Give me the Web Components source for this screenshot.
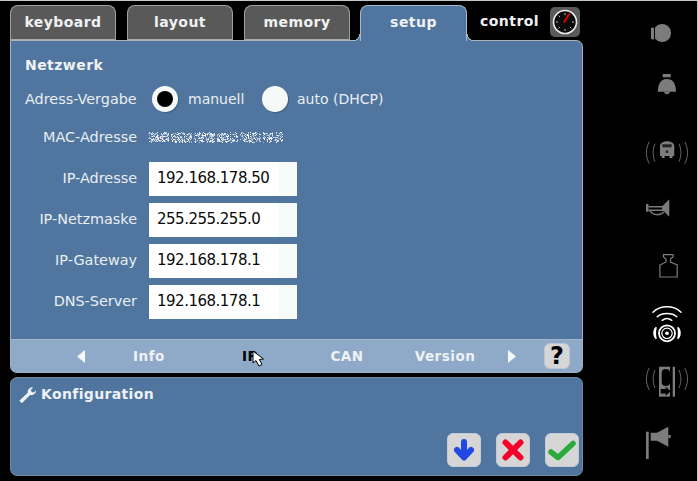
<!DOCTYPE html>
<html>
<head>
<meta charset="utf-8">
<style>
  html, body { margin: 0; padding: 0; background: #000; }
  body { width: 698px; height: 481px; overflow: hidden; font-family: "DejaVu Sans", sans-serif; color: #eef2f5; }
</style>
</head>
<body>
<setup-screen>
  <tab-item slot="tabs" text="keyboard"></tab-item>
  <tab-item slot="tabs" text="layout"></tab-item>
  <tab-item slot="tabs" text="memory"></tab-item>
  <tab-item slot="tabs" text="setup" active></tab-item>
  <control-tab slot="tabs"></control-tab>

  <net-panel slot="main">
    <radio-row></radio-row>
    <mac-row></mac-row>
    <field-row label="IP-Adresse" value="192.168.178.50"></field-row>
    <field-row label="IP-Netzmaske" value="255.255.255.0"></field-row>
    <field-row label="IP-Gateway" value="192.168.178.1"></field-row>
    <field-row label="DNS-Server" value="192.168.178.1"></field-row>
  </net-panel>

  <config-panel slot="config"></config-panel>
  <side-rail slot="rail"></side-rail>
</setup-screen>

<script>
window.customElements.define('setup-screen', class extends HTMLElement {
  constructor() {
    super();
    this.attachShadow({mode: 'open'}).innerHTML = `
      <style>
        :host { display: grid; grid-template-columns: 573px 48px; column-gap: 60px; width: 698px; height: 481px; box-sizing: border-box; padding: 5px 0 0 10px; box-shadow: inset 0 1px 0 #c8c8c8, inset -1px 0 0 #c8c8c8; }
        .left { display: flex; flex-direction: column; }
        .tabs { display: flex; height: 35px; }
      </style>
      <div class="left">
        <div class="tabs"><slot name="tabs"></slot></div>
        <slot name="main"></slot>
        <slot name="config"></slot>
      </div>
      <slot name="rail"></slot>
    `;
  }
});

window.customElements.define('tab-item', class extends HTMLElement {
  constructor() {
    super();
    const text = this.getAttribute('text');
    this.attachShadow({mode: 'open'}).innerHTML = `
      <style>
        :host { display: block; position: relative; box-sizing: border-box; width: 106px; height: 35px; margin-right: 11px;
          background: #595959; border: 1px solid #9aa3a3; border-bottom: 0; border-radius: 8px 8px 0 0;
          font-weight: bold; font-size: 14px; letter-spacing: .45px; text-align: center; line-height: 32px; color: #f0f2f2; }
        :host([active]) { background: #50769f; width: 107px; margin-left: -1px; margin-right: 0; height: 36px; z-index: 2; border-color: #a9b8c8; }
        :host(:not([active])) { box-shadow: inset 0 -1px 0 #a4adad; }
        :host([active])::before, :host([active])::after { content: ""; position: absolute; bottom: 0; width: 7px; height: 7px; }
        :host([active])::before { left: -8px; background: radial-gradient(circle at 0 0, transparent 6px, #a9b8c8 6.5px, #a9b8c8 7px, #50769f 7.5px); }
        :host([active])::after { right: -8px; background: radial-gradient(circle at 100% 0, transparent 6px, #a9b8c8 6.5px, #a9b8c8 7px, #50769f 7.5px); }
      </style>
      ${text}
    `;
  }
});

window.customElements.define('control-tab', class extends HTMLElement {
  constructor() {
    super();
    this.attachShadow({mode: 'open'}).innerHTML = `
      <style>
        :host { display: flex; align-items: center; height: 32px; margin-left: 13px; font-weight: bold; font-size: 14px; letter-spacing: .45px; color: #f0f2f2; }
        .gauge { margin-left: 11px; margin-top: 1px; width: 30px; height: 30px; border-radius: 5px; background: #5a5a5a; display: block; }
      </style>
      control
      <svg class="gauge" viewBox="0 0 30 30">
        <circle cx="15" cy="15" r="11.500" fill="#0b0b0b" stroke="#eee" stroke-width="1.600"/>
        <g stroke="#bbb" stroke-width="1">
          <path d="M15 6v2M15 22v2M6 15h2M22 15h2M8.600 8.600l1.400 1.400M20 20l1.400 1.400M8.600 21.400l1.400-1.400"/>
        </g>
        <path d="M14 15.500L19.500 6.500" stroke="#e60000" stroke-width="1.800"/>
      </svg>
    `;
  }
});

window.customElements.define('net-panel', class extends HTMLElement {
  constructor() {
    super();
    this.attachShadow({mode: 'open'}).innerHTML = `
      <style>
        :host { display: flex; flex-direction: column; box-sizing: border-box; height: 333px; background: #50769f; border: 1px solid #a3b2c2; border-top-color: #a9b4b4; border-radius: 0 7px 7px 7px; overflow: hidden; }
        .body { flex: 1; padding: 15px 14px 0; }
        h2 { margin: 0 0 10px; font-size: 14px; font-weight: bold; letter-spacing: .45px; line-height: 18px; color: #f0f2f4; }
      </style>
      <div class="body">
        <h2>Netzwerk</h2>
        <slot></slot>
      </div>
      <nav-bar></nav-bar>
    `;
  }
});

window.customElements.define('radio-row', class extends HTMLElement {
  constructor() {
    super();
    this.attachShadow({mode: 'open'}).innerHTML = `
      <style>
        :host { display: flex; align-items: center; height: 30px; font-size: 14.4px; color: #e9eef2; white-space: nowrap; }
        .label { width: 127px; }
        .radio { width: 26px; height: 26px; border-radius: 50%; background: #f6f9f7; display: grid; place-items: center; box-shadow: 1px 1px 1px #3d5f85; }
        .dot { width: 16px; height: 16px; border-radius: 50%; background: #000; }
        .opt { margin-left: 10px; width: 74px; font-size: 14px; }
        .opt.last { margin-left: 9px; }
      </style>
      <span class="label">Adress-Vergabe</span>
      <span class="radio"><span class="dot"></span></span>
      <span class="opt">manuell</span>
      <span class="radio"></span>
      <span class="opt last">auto (DHCP)</span>
    `;
  }
});

window.customElements.define('mac-row', class extends HTMLElement {
  constructor() {
    super();
    // scrambled address: seeded speckle, so that the picture is the same on every run
    let seed = 7, dots = '';
    for (let x = 0; x < 135; x++) {
      for (let y = 0; y < 11; y++) {
        seed = (seed * 16807) % 2147483647;
        const edge = y === 0 || y === 10 ? 18 : 52;
        if (seed % 100 < edge && (x % 23) < 21) {
          const a = (seed % 7) / 10 + .4;
          dots += `<rect x="${x}" y="${y}" width="1" height="1" fill="#fff" opacity="${a}"/>`;
        }
      }
    }
    this.attachShadow({mode: 'open'}).innerHTML = `
      <style>
        :host { display: flex; align-items: center; height: 30px; margin-top: 8px; margin-bottom: 10px; font-size: 14.4px; color: #e9eef2; white-space: nowrap; }
        .label { width: 112px; text-align: right; }
        svg { margin-left: 11px; display: block; }
      </style>
      <span class="label">MAC-Adresse</span>
      <svg width="135" height="11" viewBox="0 0 135 11">${dots}</svg>
    `;
  }
});

window.customElements.define('field-row', class extends HTMLElement {
  constructor() {
    super();
    this.attachShadow({mode: 'open'}).innerHTML = `
      <style>
        :host { display: flex; align-items: center; height: 34px; margin-bottom: 7px; font-size: 14.4px; color: #e9eef2; white-space: nowrap; }
        .label { width: 112px; text-align: right; padding-bottom: 2px; }
        .input { box-sizing: border-box; width: 148px; height: 34px; margin-left: 12px; padding-left: 8px; color: #0a0a0a; font-size: 15px; letter-spacing: -.5px; line-height: 33px;
          background: linear-gradient(90deg, #fff 130px, #f6faf8 130px); }
      </style>
      <span class="label">${this.getAttribute('label')}</span>
      <span class="input">${this.getAttribute('value')}</span>
    `;
  }
});

window.customElements.define('nav-bar', class extends HTMLElement {
  constructor() {
    super();
    this.attachShadow({mode: 'open'}).innerHTML = `
      <style>
        :host { display: block; position: relative; height: 32px; background: #8fa9c8; border-top: 1px solid #a3b5cb; font-weight: bold; font-size: 13.5px; letter-spacing: .5px; color: #eef2f5; }
        .row { display: grid; grid-template-columns: 74px 128px 74px 120px 76px 61px 1fr; align-items: center; height: 32px; }
        span { text-align: center; }
        .arrow { display: block; width: 8px; height: 13px; }
        .l { justify-self: end; }
        .r { justify-self: start; margin-left: 25px; }
        .cur { color: #000; }
        .help { width: 26px; height: 26px; box-sizing: border-box; border-radius: 6px; background: #d6d6d6; border: 1px solid #bcc6d2; color: #000; font-size: 24px; line-height: 24px; letter-spacing: 0; }
        .pointer { position: absolute; left: 241px; top: 10px; }
      </style>
      <div class="row">
        <svg class="arrow l" viewBox="0 0 8 13"><path d="M8 0V13L0 6.500Z" fill="#f4f6f8"/></svg>
        <span>Info</span>
        <span class="cur">IP</span>
        <span>CAN</span>
        <span>Version</span>
        <svg class="arrow r" viewBox="0 0 8 13"><path d="M0 0V13L8 6.500Z" fill="#f4f6f8"/></svg>
        <span class="help">?</span>
      </div>
      <svg class="pointer" width="14" height="18" viewBox="0 0 14 18">
        <path d="M1 1L1 13L4 10.500L7 16L10 14.500L7.300 9.500L11.500 9Z" fill="#fff" stroke="#000" stroke-width="1"/>
      </svg>
    `;
  }
});

window.customElements.define('config-panel', class extends HTMLElement {
  constructor() {
    super();
    this.attachShadow({mode: 'open'}).innerHTML = `
      <style>
        :host { display: flex; flex-direction: column; justify-content: space-between; box-sizing: border-box; height: 99px; margin-top: 4px; background: #50769f; border: 1px solid #76899e; border-radius: 7px; padding: 7px 3px 8px 8px; }
        h3 { margin: 0; display: flex; align-items: center; gap: 5px; font-size: 14px; font-weight: bold; letter-spacing: .35px; line-height: 18px; color: #eef2f5; }
        .acts { display: flex; justify-content: flex-end; gap: 15px; }
      </style>
      <h3>
        <svg width="17" height="17" viewBox="0 0 17 17"><path d="M0.800 14.200L8.800 6.800C8.200 4 10.400 1 14.200 1.200L11.800 3.700L12.600 6L15 6.600L17 4.200C17.300 7.600 14.200 9.800 11 9L3.600 16.400C2.400 17.300 .2 15.600 .8 14.200Z" fill="#f0f3f5"/></svg>
        Konfiguration
      </h3>
      <div class="acts">
        <act-button><svg viewBox="0 0 24 24" width="24" height="24"><path d="M12 4V18M5 12L12 19.500L19 12" fill="none" stroke="#2148e0" stroke-width="6" stroke-linecap="round" stroke-linejoin="round"/></svg></act-button>
        <act-button><svg viewBox="0 0 24 24" width="24" height="24"><path d="M4.500 4.500L19.500 19.500M19.500 4.500L4.500 19.500" fill="none" stroke="#f5002a" stroke-width="6" stroke-linecap="round"/></svg></act-button>
        <act-button><svg viewBox="0 0 30 24" width="30" height="24"><path d="M4 14L11 19.500L26 5.500" fill="none" stroke="#2aaa3a" stroke-width="5.500" stroke-linecap="round" stroke-linejoin="round"/></svg></act-button>
      </div>
    `;
  }
});

window.customElements.define('act-button', class extends HTMLElement {
  constructor() {
    super();
    this.attachShadow({mode: 'open'}).innerHTML = `
      <style>
        :host { display: grid; place-items: center; box-sizing: border-box; width: 34px; height: 34px; border-radius: 6px; background: #d6d6d6; border: 1px solid #c2ccd6; }
      </style>
      <slot></slot>
    `;
  }
});

window.customElements.define('side-rail', class extends HTMLElement {
  constructor() {
    super();
    const g = '#7c7c7c';
    const waves = `<path d="M6.300 0C2.500 7 2.500 15 6.300 22M12 2C9.500 8 9.500 14 12 20M36 2C38.500 8 38.500 14 36 20M41.700 0C45.500 7 45.500 15 41.700 22" fill="none" stroke="#666" stroke-width="1"/>`;
    this.attachShadow({mode: 'open'}).innerHTML = `
      <style>
        :host { display: flex; flex-direction: column; width: 48px; padding-top: 15px; }
        svg { display: block; flex: none; }
      </style>
      <svg width="48" height="26" viewBox="0 0 48 26">
        <rect x="8" y="7.700" width="3" height="11.600" fill="${g}"/>
        <path d="M12 7.500A9 9 0 1 1 12 18.500Z" fill="${g}"/>
      </svg>
      <svg style="margin-top:26px" width="48" height="26" viewBox="0 0 48 26">
        <rect x="19.700" y="2" width="8" height="3.300" fill="${g}"/>
        <path d="M24 7C17 7 15 13 14.700 19.700H33C32.700 13 31 7 24 7Z" fill="${g}"/>
        <path d="M21 19.700H27C26.500 23 21.500 23 21 19.700Z" fill="${g}"/>
      </svg>
      <svg style="margin-top:40px" width="48" height="28" viewBox="0 0 48 28">
        <g transform="translate(0 3.700)">${waves}</g>
        <path d="M17 8C17 1.500 31.300 1.500 31.300 8V18H29.500V20H26.500V18H21.500V20H18.700V18H17Z" fill="${g}"/>
        <rect x="19.300" y="6.300" width="9.400" height="3" fill="#222"/><rect x="22.700" y="12.500" width="2.600" height="2.400" fill="#222"/>
      </svg>
      <svg style="margin-top:30px" width="48" height="24" viewBox="0 0 48 24">
        <rect x="3" y="8" width="2.500" height="7.700" fill="${g}"/>
        <path d="M5.500 10H19.500L26.300 3.300V20.700L20.500 15H5.500V13.500H19V11.500H5.500Z" fill="${g}"/>
        <path d="M7 14.500C10 20 17 19.500 21 16" fill="none" stroke="${g}" stroke-width="1.500"/>
      </svg>
      <svg style="margin-top:32px" width="48" height="28" viewBox="0 0 48 28">
        <path d="M20.500 2.600H30V5L27.500 7V10L34.200 13V25H16.900V13L23 10V7L20.500 5Z" fill="none" stroke="${g}" stroke-width="1.200"/>
      </svg>
      <svg style="margin-top:24px" width="48" height="40" viewBox="0 0 48 40">
        <g fill="none" stroke="#fff" stroke-linecap="round" stroke-width="1.500">
          <path d="M10 8.300C17 .8 31 .8 38 8.300"/>
          <path d="M14.200 12.800C19 8.500 29 8.500 33.800 12.800"/>
          <path d="M19.200 16.300C22 14.300 26 14.300 28.800 16.300"/>
          <circle cx="24" cy="29.300" r="8" stroke-width="1.800"/>
          <circle cx="24" cy="29.300" r="5.200" stroke-width="1.200"/>
        </g>
        <circle cx="24" cy="29.300" r="1.800" fill="#fff"/>
        <path d="M12.500 23C9.500 26 9.500 32 12.500 35L14 34.500C12.800 32 12.800 26 14 23.500ZM35.500 23C38.500 26 38.500 32 35.500 35L34 34.500C35.200 32 35.200 26 34 23.500Z" fill="#fff"/>
      </svg>
      <svg style="margin-top:20px" width="48" height="36" viewBox="0 0 48 36">
        <g transform="translate(0 4)">${waves}</g>
        <rect x="16" y="2.700" width="11" height="30" fill="${g}"/><rect x="29.700" y="2.700" width="2.300" height="30" fill="${g}"/>
        <rect x="18.700" y="5" width="8.300" height="17" rx="4" fill="#000"/>
        <path d="M17.700 25H22.700V22.700L27.700 27.200L22.700 31.700V29.400H17.700Z" fill="#000"/>
      </svg>
      <svg style="margin-top:24px" width="48" height="38" viewBox="0 0 48 38">
        <rect x="3" y="7.700" width="2.700" height="27.300" fill="${g}"/>
        <path d="M7.700 8.700H14L25.300 2.700V22.700L14 16.700H7.700Z" fill="${g}"/><rect x="25.300" y="11" width="2.400" height="3" fill="${g}"/>
      </svg>
    `;
  }
});
</script>
</body>
</html>
